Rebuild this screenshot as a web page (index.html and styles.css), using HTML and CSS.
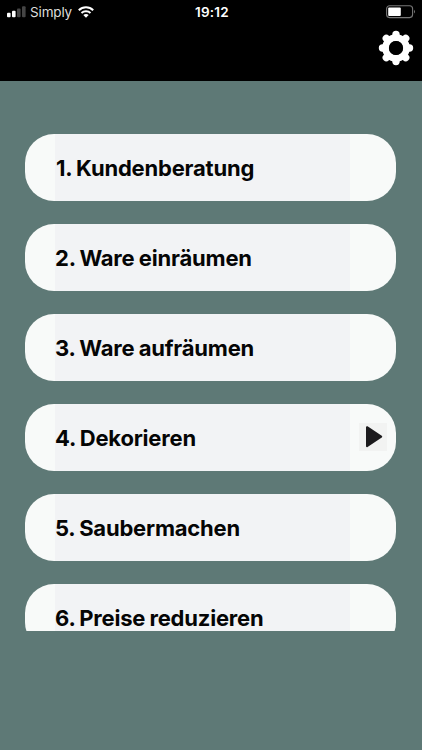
FILE: index.html
```html
<!DOCTYPE html>
<html lang="de">
<head>
<meta charset="utf-8">
<title>Aufgaben</title>
<link rel="stylesheet" href="styles.css">
</head>
<body>
<header class="header">
  <div class="status">
    <div class="carrier">
      <svg class="signal" width="19" height="12" viewBox="0 0 19 12"><rect x="0" y="6.8" width="3.6" height="4.4" rx="1" fill="#fff"/><rect x="5" y="4.8" width="3.6" height="6.4" rx="1" fill="#fff"/><rect x="10" y="2.6" width="3.6" height="8.6" rx="1" fill="#454545"/><rect x="15" y="0.2" width="3.6" height="11" rx="1" fill="#454545"/></svg>
      <span class="name">Simply</span>
      <svg class="wifi" width="16" height="12" viewBox="0 0 16 12"><path d="M.8 4.3C4.8 .3 11.2 .3 15.2 4.3M3.5 7C6 4.7 10 4.7 12.5 7" fill="none" stroke="#fff" stroke-width="2"/><path d="M5.3 8.9Q8 7 10.7 8.9L8 11.7Z" fill="#fff"/></svg>
    </div>
    <span class="time">19:12</span>
    <svg class="battery" width="30" height="14" viewBox="0 0 30 14"><rect x=".6" y=".8" width="26" height="11.8" rx="3" fill="none" stroke="#777" stroke-width="1.1"/><rect x="2.2" y="2.4" width="12.6" height="8.6" rx="1" fill="#fff"/><path d="M28 4.8Q30 6.7 28 8.6Z" fill="#777"/></svg>
  </div>
  <svg class="gear" width="36" height="36" viewBox="-18 -18 36 36">
    <g fill="none" stroke="#fff"><circle r="10.4" stroke-width="6.8"/><path d="M0-13.5V-12M0 13.5V12M-13.5 0H-12M13.5 0H12M-9.7-9.7L-8.5-8.5M9.7-9.7L8.5-8.5M-9.7 9.7L-8.5 8.5M9.7 9.7L8.5 8.5" stroke-width="7.4" stroke-linecap="round"/></g>
    <circle r="7.1" fill="#000"/>
  </svg>
</header>
<main class="list">
  <div class="card"><span class="label">1. Kundenberatung</span></div>
  <div class="card"><span class="label">2. Ware einräumen</span></div>
  <div class="card"><span class="label">3. Ware aufräumen</span></div>
  <div class="card"><span class="label">4. Dekorieren</span>
    <span class="play"><svg width="28" height="28" viewBox="0 0 28 28"><path d="M8 4.2L22.2 13.6L8 23.2Z" fill="#1c1b1d" stroke="#1c1b1d" stroke-width="2" stroke-linejoin="round"/></svg></span>
  </div>
  <div class="card"><span class="label">5. Saubermachen</span></div>
  <div class="card"><span class="label">6. Preise reduzieren</span></div>
</main>
</body>
</html>
```
FILE: styles.css
```css
* { box-sizing: border-box; }
body {
  margin: 0;
  height: 750px;
  overflow: hidden;
  background: #5e7976;
  font-family: Inter, "Liberation Sans", sans-serif;
}
svg { display: block; flex: none; }
.header {
  height: 81px;
  background: #000;
  color: #fff;
}
.status {
  display: grid;
  grid-template-columns: 1fr auto 1fr;
  align-items: center;
  height: 24px;
  padding: 0 6px 0 7px;
}
.carrier { display: flex; align-items: center; }
.name {
  margin-left: 4px;
  color: #ddd;
  font-size: 13.5px;
  line-height: 24px;
  letter-spacing: -0.15px;
}
.signal { margin-top: -1px; }
.wifi { margin: -1px 0 0 6px; }
.time {
  margin-left: 1px;
  font-size: 13.5px;
  font-weight: 600;
  line-height: 24px;
  letter-spacing: 0.2px;
}
.battery { justify-self: end; }
.gear { margin: 6px 8px 0 auto; }
.list {
  display: flex;
  flex-direction: column;
  gap: 22.6px;
  height: 497px;
  margin: 53px 26px 0 25px;
  overflow: hidden;
}
.card {
  display: flex;
  flex: none;
  align-items: center;
  height: 67.4px;
  padding: 0 9px 0 30px;
  border-radius: 29px;
  background: linear-gradient(90deg, #f8faf9 30px, #f2f3f5 30px 325px, #f8faf9 325px);
}
.card:first-child { padding-left: 31px; }
.label {
  color: #050505;
  font-size: 22px;
  font-weight: 700;
  line-height: 30px;
  letter-spacing: -0.2px;
  word-spacing: -0.7px;
  white-space: nowrap;
}
.play {
  margin: -2px 0 0 auto;
  background: #f2f3f2;
}
```
